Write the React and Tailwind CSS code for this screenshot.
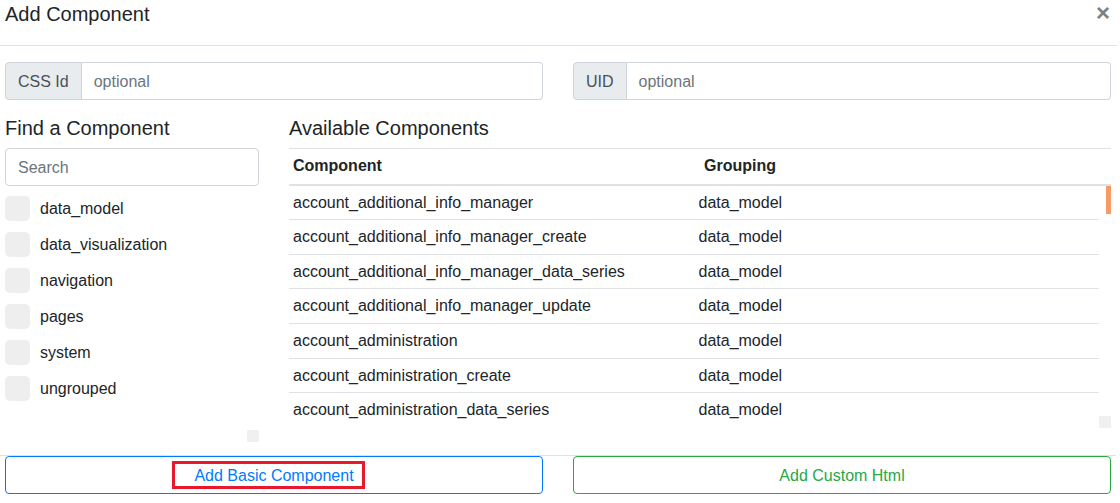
import React from "react";

const components = [
  "account_additional_info_manager",
  "account_additional_info_manager_create",
  "account_additional_info_manager_data_series",
  "account_additional_info_manager_update",
  "account_administration",
  "account_administration_create",
  "account_administration_data_series",
];

const groups = ["data_model", "data_visualization", "navigation", "pages", "system", "ungrouped"];

function InputGroup({ label }) {
  return (
    <div className="flex h-[38px] w-[538px] text-[16px]">
      <div className="flex items-center px-3 pt-[2px] bg-[#e9ecef] border border-[#ced4da] rounded-l-[4px] text-[#495057]">
        {label}
      </div>
      <div className="flex-1 flex items-center px-3 pt-[2px] border border-l-0 border-[#ced4da] rounded-r-[4px] text-[#6c757d]">
        optional
      </div>
    </div>
  );
}

export default function App() {
  return (
    <div className="w-[1120px] h-[503px] bg-white overflow-hidden text-[#212529] font-['Liberation_Sans',Arial,sans-serif]">
      <div className="relative w-[1117px] h-[46px] border-b border-[#dee2e6]">
        <div className="pl-[5px] text-[20px] leading-[28px]">Add Component</div>
        <span className="absolute right-[7px] top-[2px] text-[24px] leading-[22px] font-bold text-[#808080]">
          ×
        </span>
      </div>

      <div className="h-[409px] pl-[5px] pt-4">
        <div className="flex gap-[30px]">
          <InputGroup label="CSS Id" />
          <InputGroup label="UID" />
        </div>

        <div className="flex gap-[30px] mt-4">
          <div className="w-[254px]">
            <div className="text-[20px] leading-6">Find a Component</div>
            <div className="mt-2 h-[38px] flex items-center px-3 pt-[2px] border border-[#ced4da] rounded-[4px] text-[16px] text-[#6c757d]">
              Search
            </div>
            <div className="mt-[10px] h-[246px] flex">
              <div className="flex-1 flex flex-col gap-[11px]">
                {groups.map((g) => (
                  <div key={g} className="flex items-center h-[25px] text-[16px]">
                    <div className="w-[25px] h-[25px] rounded-[5px] bg-[#eeeeee]" />
                    <span className="ml-[10px]">{g}</span>
                  </div>
                ))}
              </div>
              <div className="w-3 flex flex-col justify-end">
                <div className="w-3 h-3 bg-[#f0f0f0]" />
              </div>
            </div>
          </div>

          <div className="w-[822px]">
            <div className="text-[20px] leading-6">Available Components</div>
            <div className="mt-2 flex border-t border-b-2 border-[#dee2e6] text-[16px] font-bold leading-6">
              <div className="w-1/2 pt-[5px] pb-[5.6px] pl-[4px]">Component</div>
              <div className="w-1/2 pt-[5px] pb-[5.6px] pl-[4px]">Grouping</div>
            </div>
            <div className="flex h-[245px]">
              <div className="w-[810px] h-[240px] overflow-hidden">
                {components.map((c) => (
                  <div key={c} className="flex border-b border-[#dee2e6] text-[16px] leading-6">
                    <div className="w-1/2 pt-[5px] pb-[4.6px] pl-[4px]">{c}</div>
                    <div className="w-1/2 pt-[5px] pb-[4.6px] pl-[4.5px]">data_model</div>
                  </div>
                ))}
              </div>
              <div className="w-3 flex flex-col justify-between">
                <div className="ml-[7px] w-[5px] h-[28px] bg-[#f79a66]" />
                <div className="w-3 h-3 mb-[3px] bg-[#f0f0f0]" />
              </div>
            </div>
          </div>
        </div>
      </div>

      <div className="w-[1116px] border-t border-[#dee2e6]">
        <div className="pl-[5px] flex gap-[30px] text-[16px]">
          <div className="w-[538px] h-[38px] border border-[#007bff] rounded-[4px] flex items-center justify-center pt-[2px] text-[#007bff]">
            <span className="relative leading-[22px]">
              Add Basic Component
              <span className="absolute left-[-22px] right-[-11px] top-[-4px] bottom-[-2px] border-[3px] border-[#e8192c]" />
            </span>
          </div>
          <div className="w-[538px] h-[38px] border border-[#28a745] rounded-[4px] flex items-center justify-center pt-[2px] text-[#28a745]">
            Add Custom Html
          </div>
        </div>
      </div>
    </div>
  );
}
